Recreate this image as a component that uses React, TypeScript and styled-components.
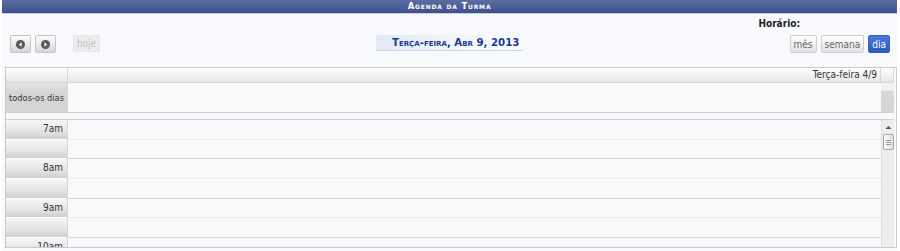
import React from 'react';
import styled, { createGlobalStyle } from 'styled-components';

const GlobalStyle = createGlobalStyle`
  body {
    margin: 0;
    background: #ffffff;
    font-family: 'DejaVu Sans Condensed', 'DejaVu Sans', Verdana, sans-serif;
  }
`;

const Page = styled.div`
  width: 895px;
  height: 251px;
  margin-left: 2px;
  background: #f8f9fc;
  display: flex;
  flex-direction: column;
`;

const TitleBar = styled.div`
  height: 13px;
  background: linear-gradient(#5e6ea5, #3f4f88);
  border-bottom: 1px solid #c9cfe2;
  color: #ffffff;
  font-family: 'DejaVu Sans', Verdana, sans-serif;
  font-size: 8.5px;
  font-weight: bold;
  font-variant: small-caps;
  letter-spacing: 0.8px;
  line-height: 13px;
  text-align: center;
`;

const HorarioRow = styled.div`
  height: 14px;
  padding-top: 3px;
  padding-right: 97px;
  text-align: right;
  font-size: 10px;
  font-weight: bold;
  line-height: 14px;
  color: #222222;
`;

const Toolbar = styled.div`
  margin-top: 4px;
  height: 18px;
  display: grid;
  grid-template-columns: 1fr auto 1fr;
  align-items: start;
`;

const LeftGroup = styled.div`
  display: flex;
  padding-left: 8px;
  gap: 4px;
`;

const RightGroup = styled.div`
  display: flex;
  justify-content: flex-end;
  padding-right: 7px;
  gap: 4px;
`;

const NavButton = styled.button`
  width: 21px;
  height: 18px;
  padding: 0;
  border: 1px solid #c4c4c4;
  border-radius: 2px;
  background: linear-gradient(#fdfdfd, #d6d6d6);
  display: flex;
  align-items: center;
  justify-content: center;
`;

const TodayButton = styled.button`
  margin-left: 13px;
  width: 27px;
  height: 17px;
  padding: 0;
  border: 1px solid #e6e6e6;
  border-radius: 2px;
  background: #ececec;
  color: #c2c2c2;
  font-family: inherit;
  font-size: 10px;
`;

const DateTitle = styled.div`
  width: 131px;
  height: 15px;
  padding-left: 16px;
  background: linear-gradient(90deg, #e2e9f6, #f3f6fb 60%, #f8f9fc);
  border-bottom: 1px solid #cdd8ee;
  color: #1b3a8c;
  font-family: 'DejaVu Sans', Verdana, sans-serif;
  font-size: 10.2px;
  font-weight: bold;
  font-variant: small-caps;
  line-height: 16px;
  white-space: nowrap;
`;

const ViewButton = styled.button<{ $active?: boolean }>`
  height: 18px;
  padding: 0 3px;
  border: 1px solid ${(p) => (p.$active ? '#3560c0' : '#d0d0d0')};
  border-radius: 2px;
  background: ${(p) =>
    p.$active ? 'linear-gradient(#4a78d8, #2f5bbf)' : 'linear-gradient(#ffffff, #e2e2e2)'};
  color: ${(p) => (p.$active ? '#ffffff' : '#666666')};
  font-family: inherit;
  font-size: 10px;
`;

const Calendar = styled.div`
  margin: 14px 0 0 3px;
  height: 179px;
  border: 1px solid #cacaca;
  padding-right: 2px;
  display: flex;
  flex-direction: column;
  font-size: 10px;
  color: #333333;
`;

const Row = styled.div<{ $h: number }>`
  display: grid;
  grid-template-columns: 62px 1fr 13px;
  height: ${(p) => p.$h}px;
  flex: none;
`;

const HeadCell = styled.div`
  background: linear-gradient(#ffffff, #e6e6e6);
  border-bottom: 1px solid #d6d6d6;
  border-right: 1px solid #d6d6d6;
  text-align: right;
  padding-right: 3px;
  line-height: 14px;
  white-space: nowrap;
`;

const AllDayLabel = styled.div`
  background: linear-gradient(#e4e4e4, #d6d6d6 30%, #d4d4d4);
  border-right: 1px solid #d6d6d6;
  border-bottom: 1px solid #d0d0d0;
  display: flex;
  align-items: center;
  justify-content: flex-end;
  padding-right: 3px;
  font-size: 9.2px;
  white-space: nowrap;
`;

const AllDayCell = styled.div`
  background: #f8f9fb;
  border-bottom: 1px solid #d0d0d0;
`;

const AllDaySpacer = styled.div`
  background: linear-gradient(#f4f4f4, #f0f0f0 25%, #d8d8d8 28%, #d4d4d4);
  border-bottom: 1px solid #d0d0d0;
`;

const Gap = styled.div`
  height: 6px;
  flex: none;
  border-bottom: 1px solid #d2d2d2;
`;

const TimeArea = styled.div`
  flex: 1;
  display: grid;
  grid-template-columns: 62px 1fr 13px;
  overflow: hidden;
`;

const LabelColumn = styled.div`
  display: flex;
  flex-direction: column;
  border-right: 1px solid #d6d6d6;
`;

const SlotLabel = styled.div`
  height: 19.7px;
  flex: none;
  box-sizing: border-box;
  border-bottom: 1px solid #ffffff;
  background: linear-gradient(#f6f6f6, #e4e4e4 60%, #cfcfcf);
  text-align: right;
  padding-right: 4px;
  line-height: 17px;
`;

const SlotColumn = styled.div`
  display: flex;
  flex-direction: column;
  background: #f8f9fb;
`;

const Slot = styled.div<{ $half: boolean }>`
  height: 19.7px;
  flex: none;
  box-sizing: border-box;
  border-bottom: 1px ${(p) => (p.$half ? 'dotted #dcdcdc' : 'solid #d8d8d8')};
`;

const ScrollTrack = styled.div`
  background: #ededed;
  border-left: 1px solid #e0e0e0;
  display: flex;
  flex-direction: column;
  align-items: center;
`;

const ScrollThumb = styled.div`
  margin-top: 4px;
  width: 9px;
  height: 14px;
  border: 1px solid #a8a8a8;
  border-radius: 2px;
  background: linear-gradient(90deg, #ffffff, #dcdcdc);
  display: flex;
  flex-direction: column;
  justify-content: center;
  align-items: center;
  gap: 1px;
`;

const Grip = styled.span`
  width: 5px;
  height: 1px;
  background: #9a9a9a;
`;

const ScrollFill = styled.div`
  flex: 1;
`;

const ArrowBox = styled.div<{ $up: boolean }>`
  display: flex;
  margin-top: ${(p) => (p.$up ? '5px' : '0')};
  margin-bottom: ${(p) => (p.$up ? '0' : '4px')};
`;

const Arrow = ({ up }: { up: boolean }) => (
  <ArrowBox $up={up}>
    <svg width="7" height="5" viewBox="0 0 7 5">
      <path d={up ? 'M0.5 4 L3.5 1 L6.5 4 Z' : 'M0.5 1 L3.5 4 L6.5 1 Z'} fill="#555" />
    </svg>
  </ArrowBox>
);

const NavIcon = ({ dir }: { dir: 'prev' | 'next' }) => (
  <svg width="9" height="9" viewBox="0 0 9 9">
    <circle cx="4.5" cy="4.5" r="4.5" fill="#5a5a5a" />
    <path d={dir === 'prev' ? 'M5.6 2.2 L2.8 4.5 L5.6 6.8 Z' : 'M3.4 2.2 L6.2 4.5 L3.4 6.8 Z'} fill="#fff" />
  </svg>
);

const hours = ['7am', '8am', '9am', '10am', '11am', '12pm', '1pm'];

const App: React.FC = () => {
  const slots = hours.flatMap((h) => [
    { label: h, half: true },
    { label: '', half: false },
  ]);

  return (
    <>
      <GlobalStyle />
      <Page>
        <TitleBar>Agenda da Turma</TitleBar>
        <HorarioRow>Horário:</HorarioRow>
        <Toolbar>
          <LeftGroup>
            <NavButton>
              <NavIcon dir="prev" />
            </NavButton>
            <NavButton>
              <NavIcon dir="next" />
            </NavButton>
            <TodayButton disabled>hoje</TodayButton>
          </LeftGroup>
          <DateTitle>Terça-feira, Abr 9, 2013</DateTitle>
          <RightGroup>
            <ViewButton>mês</ViewButton>
            <ViewButton>semana</ViewButton>
            <ViewButton $active>dia</ViewButton>
          </RightGroup>
        </Toolbar>
        <Calendar>
          <Row $h={15}>
            <HeadCell />
            <HeadCell>Terça-feira 4/9</HeadCell>
            <HeadCell />
          </Row>
          <Row $h={30}>
            <AllDayLabel>todos-os dias</AllDayLabel>
            <AllDayCell />
            <AllDaySpacer />
          </Row>
          <Gap />
          <TimeArea>
            <LabelColumn>
              {slots.map((s, i) => (
                <SlotLabel key={i}>{s.label}</SlotLabel>
              ))}
            </LabelColumn>
            <SlotColumn>
              {slots.map((s, i) => (
                <Slot key={i} $half={s.half} />
              ))}
            </SlotColumn>
            <ScrollTrack>
              <Arrow up />
              <ScrollThumb>
                <Grip />
                <Grip />
                <Grip />
              </ScrollThumb>
              <ScrollFill />
              <Arrow up={false} />
            </ScrollTrack>
          </TimeArea>
        </Calendar>
      </Page>
    </>
  );
};

export default App;
